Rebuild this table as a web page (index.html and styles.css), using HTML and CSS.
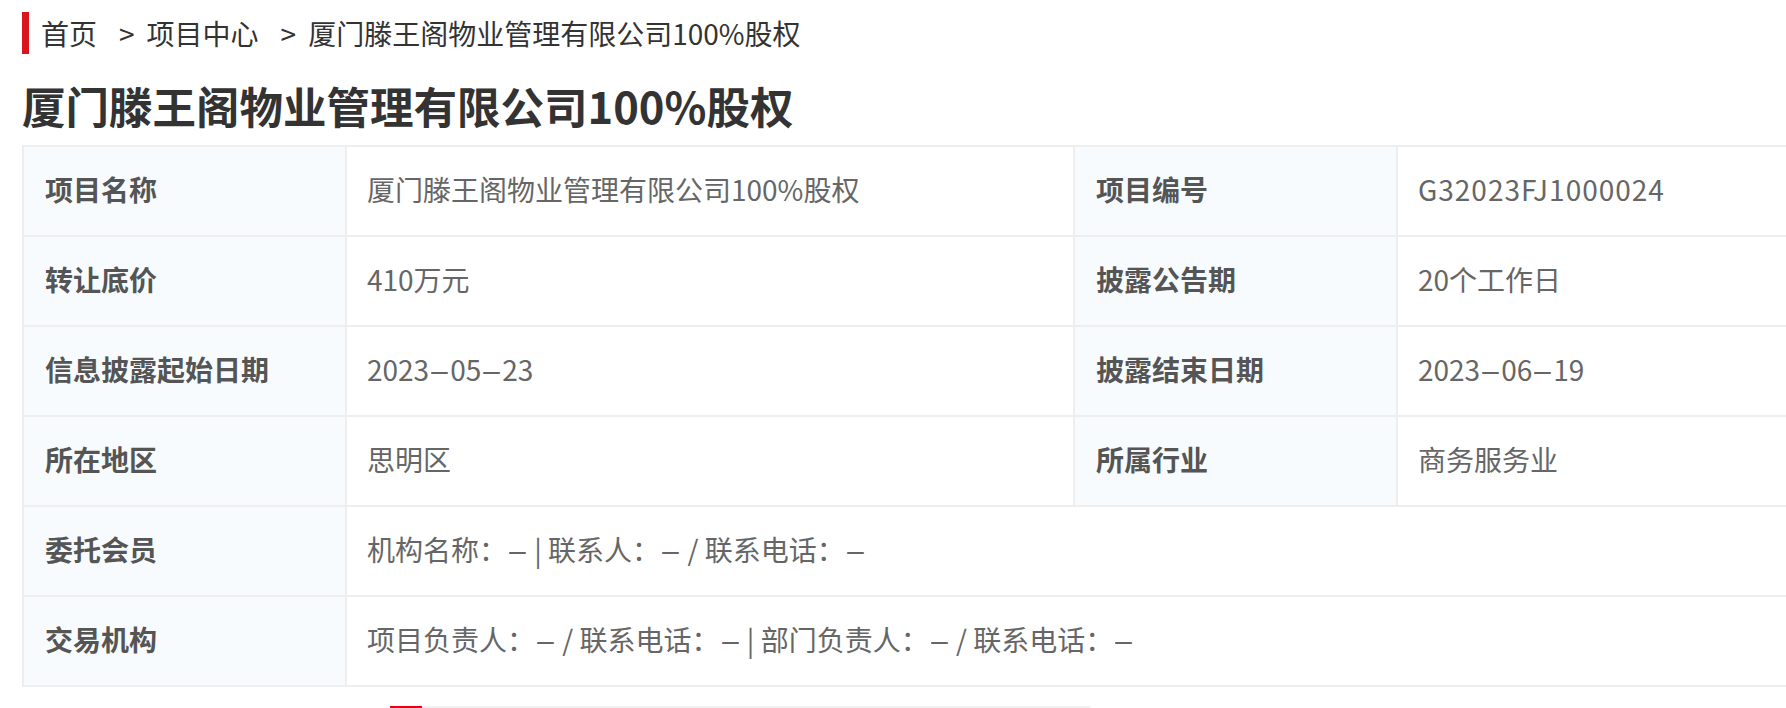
FILE: index.html
```html
<!DOCTYPE html>
<html lang="zh-CN">
<head>
<meta charset="utf-8">
<title>厦门滕王阁物业管理有限公司100%股权</title>
<link rel="stylesheet" href="styles.css">
</head>
<body>
<div class="page">
  <nav class="crumb">
    <span class="crumb-item">首页</span>
    <span class="crumb-sep">&gt;</span>
    <span class="crumb-item">项目中心</span>
    <span class="crumb-sep">&gt;</span>
    <span class="crumb-item">厦门滕王阁物业管理有限公司100%股权</span>
  </nav>
  <h1 class="title">厦门滕王阁物业管理有限公司100%股权</h1>
  <div class="table-wrap">
    <div class="info-grid">
      <div class="cell label">项目名称</div>
      <div class="cell value">厦门滕王阁物业管理有限公司100%股权</div>
      <div class="cell label">项目编号</div>
      <div class="cell value"><span class="code">G32023FJ1000024</span></div>

      <div class="cell label">转让底价</div>
      <div class="cell value">410万元</div>
      <div class="cell label">披露公告期</div>
      <div class="cell value">20个工作日</div>

      <div class="cell label">信息披露起始日期</div>
      <div class="cell value">2023<span class="dash">-</span>05<span class="dash">-</span>23</div>
      <div class="cell label">披露结束日期</div>
      <div class="cell value">2023<span class="dash">-</span>06<span class="dash">-</span>19</div>

      <div class="cell label">所在地区</div>
      <div class="cell value">思明区</div>
      <div class="cell label">所属行业</div>
      <div class="cell value">商务服务业</div>

      <div class="cell label">委托会员</div>
      <div class="cell value wide">机构名称：<span class="dash">-</span> | 联系人：<span class="dash">-</span> / 联系电话：<span class="dash">-</span></div>

      <div class="cell label">交易机构</div>
      <div class="cell value wide">项目负责人：<span class="dash">-</span> / 联系电话：<span class="dash">-</span> | 部门负责人：<span class="dash">-</span> / 联系电话：<span class="dash">-</span></div>
    </div>
  </div>
  <div class="tab-line">
    <div class="tab-track"><span class="tab-active"></span></div>
  </div>
</div>
</body>
</html>
```
FILE: styles.css
```css
html, body {
  margin: 0;
  padding: 0;
  background: #ffffff;
}

body {
  font-family: "Noto Sans CJK SC", "Noto Sans", sans-serif;
  color: #333333;
}

.page {
  padding: 12px 0 0 22px;
}

.crumb {
  display: flex;
  align-items: center;
  height: 42px;
  border-left: 7px solid #d9141b;
  padding-left: 12px;
  font-size: 28px;
  color: #333333;
  white-space: nowrap;
}

.crumb-sep {
  margin: 0 12px 0 22px;
}

.title {
  margin: 22px 0 9px 0;
  font-size: 43.5px;
  line-height: 60px;
  font-weight: 700;
  color: #333333;
  white-space: nowrap;
}

.table-wrap {
  overflow: hidden;
}

.info-grid {
  display: grid;
  grid-template-columns: 323px 728px 323px 728px;
  width: max-content;
  border-top: 2px solid #eeeeee;
  border-left: 2px solid #eeeeee;
}

.cell {
  box-sizing: border-box;
  height: 90px;
  padding: 0 20px 4px 20px;
  line-height: 84px;
  border-right: 2px solid #eeeeee;
  border-bottom: 2px solid #eeeeee;
  font-size: 28px;
  white-space: nowrap;
}

.label {
  background: #f7fbfd;
  color: #555555;
  font-weight: 700;
  padding-left: 21px;
}

.value {
  background: #ffffff;
  color: #666666;
}

.code {
  letter-spacing: 1px;
}

.dash {
  display: inline-block;
  width: 0.75em;
  text-align: center;
  transform: scaleX(2.3);
}

.wide {
  grid-column: span 3;
}

.tab-line {
  margin-top: 19px;
  padding-left: 368px;
}

.tab-track {
  width: 700px;
  height: 2px;
  background: #f2f2f2;
  display: flex;
}

.tab-active {
  width: 32px;
  height: 2px;
  background: #e60012;
}
```
